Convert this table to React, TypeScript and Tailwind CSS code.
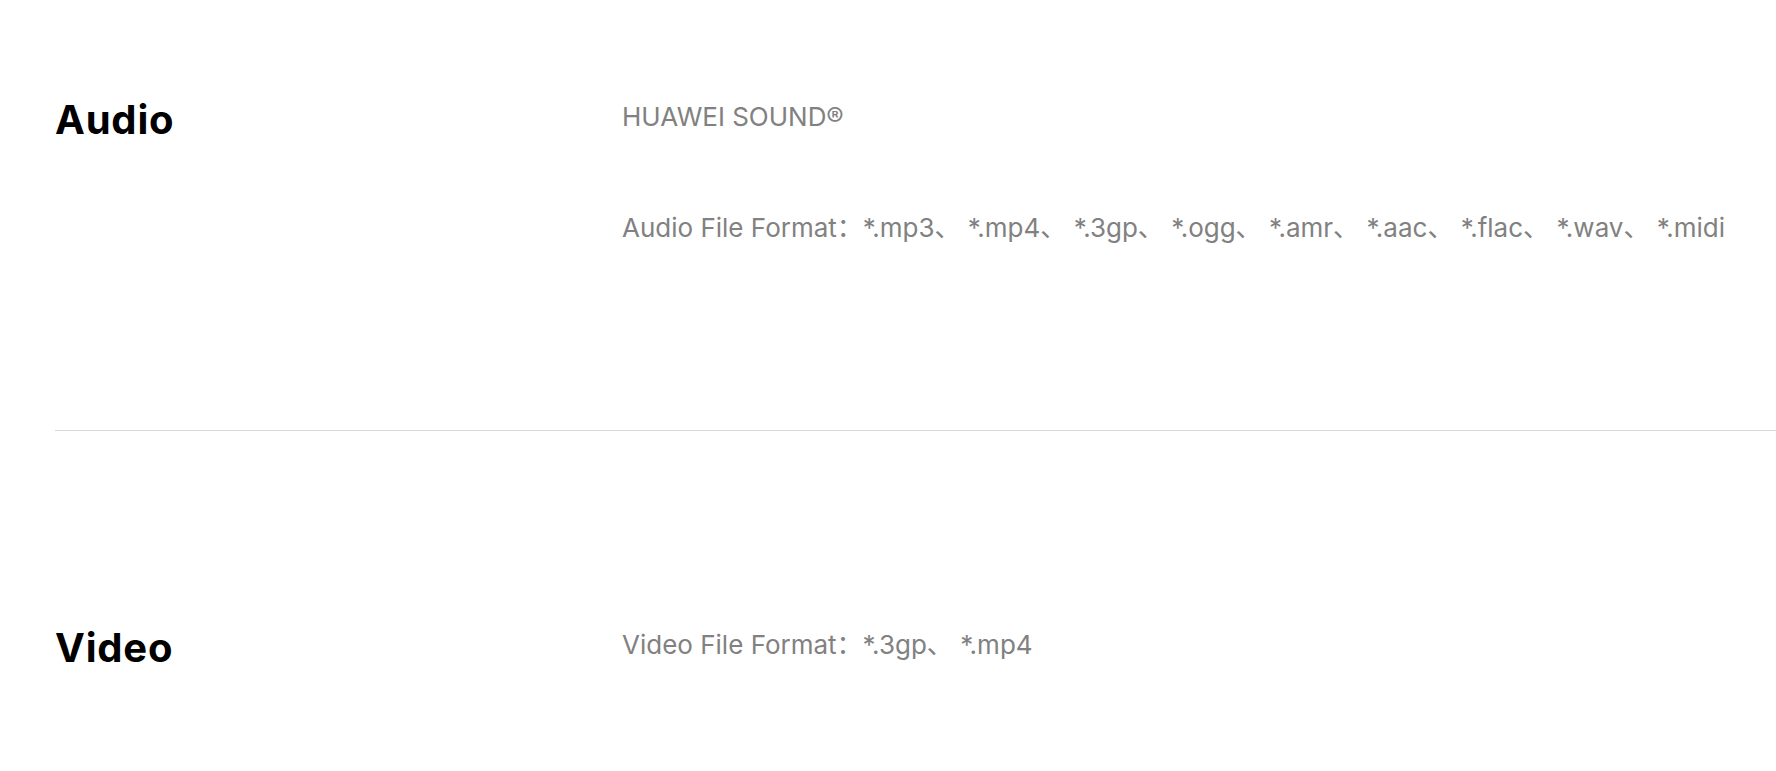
const sansStack = "font-['Inter','Noto_Sans_CJK_SC',sans-serif]";

interface SpecRowProps {
  title: string;
  lines: string[];
}

function SpecRow({ title, lines }: SpecRowProps) {
  return (
    <div className="flex items-start">
      <h2 className="w-[567px] shrink-0 text-[40px] leading-[48px] font-bold tracking-[0.8px] text-black">
        {title}
      </h2>
      <div className="mt-[5px] flex flex-col gap-[79px]">
        {lines.map((line) => (
          <p
            key={line}
            className="text-[26px] leading-[32px] font-normal text-[#818181] whitespace-nowrap"
          >
            {line}
          </p>
        ))}
      </div>
    </div>
  );
}

export default function App() {
  return (
    <div className={`min-h-screen bg-white pl-[55px] overflow-hidden ${sansStack}`}>
      <section className="pt-[96px] pb-[186px]">
        <SpecRow
          title="Audio"
          lines={[
            "HUAWEI SOUND®",
            "Audio File Format：*.mp3、 *.mp4、 *.3gp、 *.ogg、 *.amr、 *.aac、 *.flac、 *.wav、 *.midi",
          ]}
        />
      </section>
      <div className="h-px bg-[#dadada]" />
      <section className="pt-[193px] pb-[60px]">
        <SpecRow title="Video" lines={["Video File Format：*.3gp、 *.mp4"]} />
      </section>
    </div>
  );
}
